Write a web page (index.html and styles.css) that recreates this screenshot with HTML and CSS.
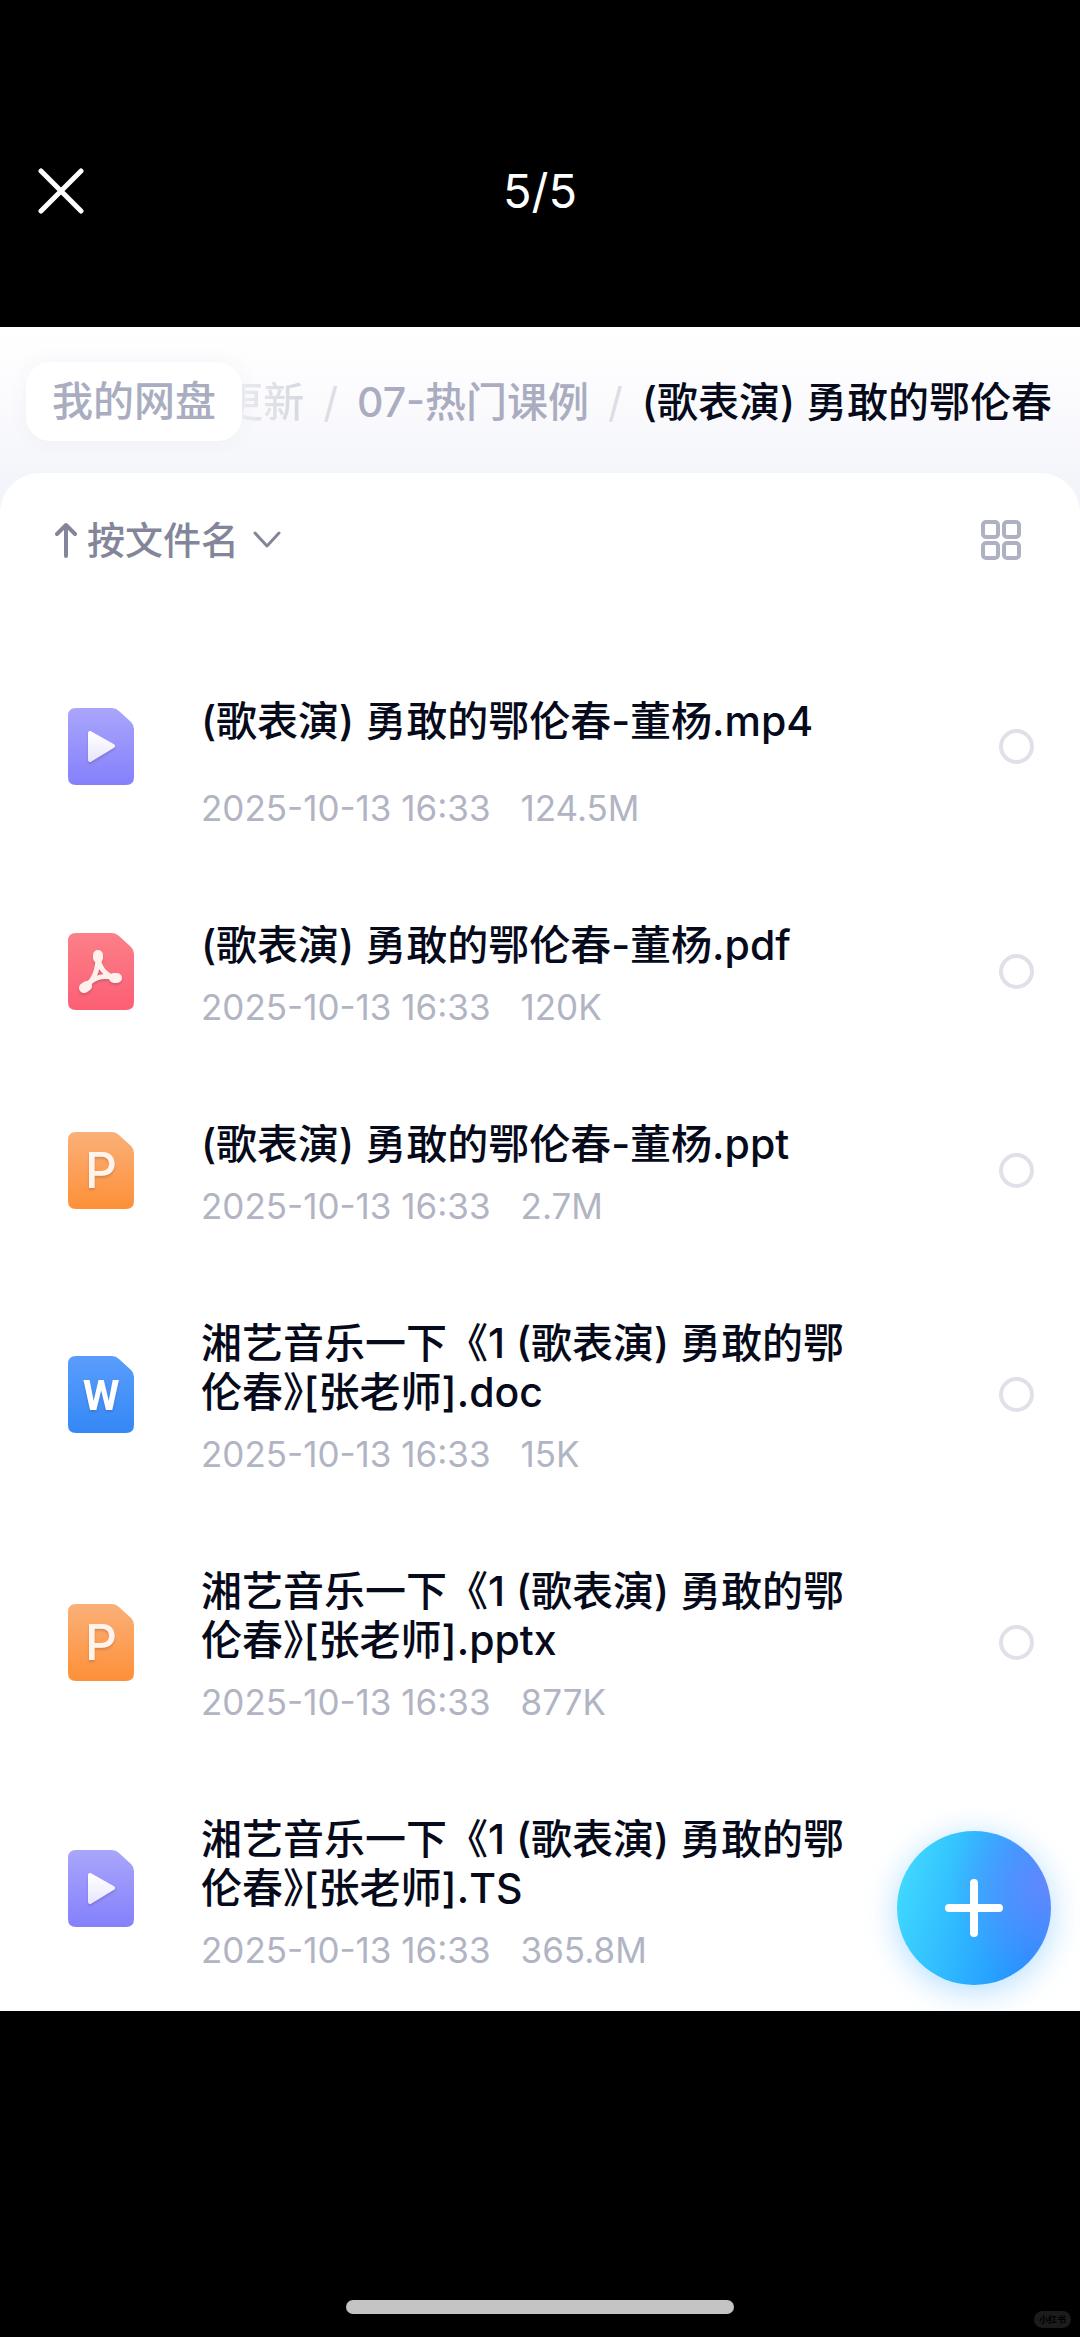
FILE: index.html
```html
<!DOCTYPE html>
<html lang="zh-CN">
<head>
  <meta charset="UTF-8" />
  <meta name="viewport" content="width=device-width, initial-scale=1.0"/>
  <title>我的网盘</title>
  <link rel="stylesheet" href="styles.css">
</head>
<body>

<!-- shared icon shapes -->
<svg class="defs" width="0" height="0" aria-hidden="true">
  <defs>
    <linearGradient id="purple" x1="0" y1="0" x2="0" y2="1"><stop offset="0" stop-color="#aaa6fb"/><stop offset="1" stop-color="#8480fc"/></linearGradient>
    <linearGradient id="red" x1="0" y1="0" x2="0" y2="1"><stop offset="0" stop-color="#fb8088"/><stop offset="1" stop-color="#fd5e74"/></linearGradient>
    <linearGradient id="orange" x1="0" y1="0" x2="0" y2="1"><stop offset="0" stop-color="#fab078"/><stop offset="1" stop-color="#fe9038"/></linearGradient>
    <linearGradient id="blue" x1="0" y1="0" x2="0" y2="1"><stop offset="0" stop-color="#5a9dfc"/><stop offset="1" stop-color="#3488f6"/></linearGradient>
    <linearGradient id="white" x1="0" y1="0" x2="0" y2="1"><stop offset="0" stop-color="#ffffff"/><stop offset="1" stop-color="#e9e7fd"/></linearGradient>
    <symbol id="sheet" viewBox="0 0 66 77">
      <path d="M8 0H44Q48 0 51 3L63 14Q66 17 66 21V69Q66 77 58 77H8Q0 77 0 69V8Q0 0 8 0Z"/>
    </symbol>
  </defs>
</svg>

<header class="topbar">
  <button class="close" aria-label="关闭">
    <svg width="46" height="46" viewBox="0 0 46 46" fill="none" stroke="#fff" stroke-width="5" stroke-linecap="round"><path d="M3 3L43 43M43 3L3 43"/></svg>
  </button>
  <span class="counter">5/5</span>
</header>

<main class="panel">
  <nav class="crumbs">
    <a class="root" href="#">我的网盘</a>
    <div class="trail">
      <a class="faded" href="#">更新</a>
      <span class="slash">/</span>
      <a href="#">07-热门课例</a>
      <span class="slash">/</span>
      <span class="current">(歌表演) 勇敢的鄂伦春</span>
    </div>
  </nav>

  <section class="card">
    <div class="toolbar">
      <button class="sort">
        <svg width="22" height="36" viewBox="0 0 22 36" fill="none" stroke="#83869a" stroke-width="4" stroke-linecap="round" stroke-linejoin="round"><path d="M11 34V3M2 12L11 3L20 12"/></svg>
        <span>按文件名</span>
        <svg class="chevron" width="28" height="18" viewBox="0 0 28 18" fill="none" stroke="#83869a" stroke-width="3" stroke-linecap="round" stroke-linejoin="round"><path d="M2 2L14 15L26 2"/></svg>
      </button>
      <button class="view" aria-label="网格视图">
        <svg width="42" height="42" viewBox="0 0 42 42" fill="none" stroke="#adb1c1" stroke-width="4"><rect x="3" y="3" width="15" height="15" rx="3"/><rect x="24" y="3" width="15" height="15" rx="3"/><rect x="3" y="24" width="15" height="15" rx="3"/><rect x="24" y="24" width="15" height="15" rx="3"/></svg>
      </button>
    </div>

    <ul class="files">
      <li class="file roomy">
        <svg class="icon" viewBox="0 0 66 77"><use href="#sheet" fill="url(#purple)"/><path class="mark" d="M22 25L45 38L22 52Z" fill="url(#white)" stroke="url(#white)" stroke-width="4" stroke-linejoin="round"/></svg>
        <label class="info" for="file1">
          <span class="name">(歌表演) 勇敢的鄂伦春-董杨.mp4</span>
          <span class="meta"><span>2025-10-13 16:33</span><span>124.5M</span></span>
        </label>
        <input type="checkbox" id="file1">
      </li>
      <li class="file">
        <svg class="icon" viewBox="0 0 66 77"><use href="#sheet" fill="url(#red)"/><g class="mark" fill="none" stroke="#fff0ec" stroke-linecap="round" stroke-linejoin="round"><path d="M30 24C31 34 37 43 48 45M30 24C30 37 26 48 16 55M21 50C27 44 37 42 48 45" stroke-width="5"/><path d="M30 22V25M46 45L49 45M16 55L19 53" stroke-width="10"/></g></svg>
        <label class="info" for="file2">
          <span class="name">(歌表演) 勇敢的鄂伦春-董杨.pdf</span>
          <span class="meta"><span>2025-10-13 16:33</span><span>120K</span></span>
        </label>
        <input type="checkbox" id="file2">
      </li>
      <li class="file">
        <svg class="icon" viewBox="0 0 66 77"><use href="#sheet" fill="url(#orange)"/><text class="mark letter" x="33" y="56">P</text></svg>
        <label class="info" for="file3">
          <span class="name">(歌表演) 勇敢的鄂伦春-董杨.ppt</span>
          <span class="meta"><span>2025-10-13 16:33</span><span>2.7M</span></span>
        </label>
        <input type="checkbox" id="file3">
      </li>
      <li class="file">
        <svg class="icon" viewBox="0 0 66 77"><use href="#sheet" fill="url(#blue)"/><text class="mark letter wide" x="33" y="54">W</text></svg>
        <label class="info" for="file4">
          <span class="name">湘艺音乐一下《1 (歌表演) 勇敢的鄂伦春<span class="half">》</span>[张老师].doc</span>
          <span class="meta"><span>2025-10-13 16:33</span><span>15K</span></span>
        </label>
        <input type="checkbox" id="file4">
      </li>
      <li class="file">
        <svg class="icon" viewBox="0 0 66 77"><use href="#sheet" fill="url(#orange)"/><text class="mark letter" x="33" y="56">P</text></svg>
        <label class="info" for="file5">
          <span class="name">湘艺音乐一下《1 (歌表演) 勇敢的鄂伦春<span class="half">》</span>[张老师].pptx</span>
          <span class="meta"><span>2025-10-13 16:33</span><span>877K</span></span>
        </label>
        <input type="checkbox" id="file5">
      </li>
      <li class="file">
        <svg class="icon" viewBox="0 0 66 77"><use href="#sheet" fill="url(#purple)"/><path class="mark" d="M22 25L45 38L22 52Z" fill="url(#white)" stroke="url(#white)" stroke-width="4" stroke-linejoin="round"/></svg>
        <div class="info">
          <span class="name">湘艺音乐一下《1 (歌表演) 勇敢的鄂伦春<span class="half">》</span>[张老师].TS</span>
          <span class="meta"><span>2025-10-13 16:33</span><span>365.8M</span></span>
        </div>
      </li>
    </ul>
  </section>

  <button class="add" aria-label="添加">
    <svg width="58" height="58" viewBox="0 0 58 58" fill="none" stroke="#fff" stroke-width="8" stroke-linecap="round"><path d="M29 4V54M4 29H54"/></svg>
  </button>
</main>

<footer class="bottombar">
  <div class="home"></div>
  <span class="badge">小红书</span>
</footer>

</body>
</html>
```

FILE: styles.css
```css
* {
  box-sizing: border-box;
}
body {
  margin: 0;
  min-height: 100vh;
  display: flex;
  flex-direction: column;
  background: #000;
  color: #060a1a;
  font-family: Inter, "Noto Sans CJK SC", sans-serif;
}
button {
  border: none;
  padding: 0;
  background: none;
  font-family: inherit;
  cursor: pointer;
}
svg {
  display: block;
  flex: none;
}
a {
  color: inherit;
  text-decoration: none;
}
.defs {
  position: absolute;
}

/* top bar */
.topbar {
  display: grid;
  grid-template-columns: 1fr auto 1fr;
  align-items: center;
  padding: 161px 38px 106px;
  color: #fff;
}
.close {
  justify-self: start;
}
.counter {
  font-size: 47px;
  line-height: 60px;
}

/* panel */
.panel {
  position: relative;
  overflow: hidden;
  background: linear-gradient(#fff, #fcfcfe 60px, #f4f5fa 150px);
}
.crumbs {
  display: flex;
  align-items: center;
  padding: 35px 28px 32px 26px;
  font-size: 41px;
  font-weight: 500;
  line-height: 60px;
  white-space: nowrap;
  color: #a9adbf;
}
.root {
  flex: none;
  padding: 9px 26px 10px;
  border-radius: 24px;
  background: #fff;
  box-shadow: 0 0 20px rgba(60, 70, 120, 0.05);
}
.trail {
  flex: 1;
  min-width: 0;
  display: flex;
  justify-content: flex-end;
  gap: 19px;
  overflow: hidden;
}
.faded,
.slash {
  color: #dcdee5;
}
.faded {
  background: linear-gradient(to right, #eff0f4, #d6d8df);
  background-clip: text;
  color: transparent;
}
.slash {
  font-weight: 400;
}
.current {
  color: #060a1a;
}
.card {
  background: #fff;
  border-radius: 40px 40px 0 0;
}

/* toolbar */
.toolbar {
  display: flex;
  justify-content: space-between;
  align-items: center;
  padding: 37px 58px 50px 55px;
}
.sort {
  display: flex;
  align-items: center;
  gap: 10px;
  font-size: 38px;
  font-weight: 500;
  line-height: 60px;
  color: #83869a;
}
.chevron {
  margin-left: 4px;
}

/* file list */
.files {
  list-style: none;
  margin: 0;
  padding: 0;
}
.file {
  display: flex;
  align-items: center;
  padding: 0 46px 0 68px;
}
.icon {
  width: 66px;
  height: 77px;
}
.mark {
  filter: drop-shadow(0 2px 1px rgba(60, 30, 60, 0.2));
}
.letter {
  font-family: Inter, sans-serif;
  font-size: 50px;
  font-weight: 500;
  text-anchor: middle;
  fill: #fff4ec;
}
.wide {
  font-family: Roboto, sans-serif;
  font-size: 42px;
  font-weight: 700;
  fill: #fff;
}
.info {
  flex: 1;
  padding: 49px 128px 46px 67px;
}
.roomy .info {
  padding-top: 77px;
}
.name,
.meta {
  display: block;
}
.name {
  font-size: 41px;
  font-weight: 500;
  line-height: 49px;
}
.half {
  font-feature-settings: "halt";
}
.meta {
  display: flex;
  gap: 30px;
  margin-top: 19px;
  font-size: 35px;
  line-height: 36px;
  color: #b1b4c3;
}
.roomy .meta {
  margin-top: 44px;
}
.file input {
  appearance: none;
  width: 35px;
  height: 35px;
  margin: 0;
  border: 4px solid #e0e1e8;
  border-radius: 50%;
}
.file:last-child .info {
  padding-right: 163px;
  margin-bottom: -3px;
}

/* floating add button */
.add {
  position: absolute;
  right: 29px;
  bottom: 26px;
  width: 154px;
  height: 154px;
  display: flex;
  align-items: center;
  justify-content: center;
  border-radius: 50%;
  background:
    radial-gradient(circle at 100% 35%, #6488ff, rgba(100, 136, 255, 0) 55%),
    linear-gradient(105deg, #40d8ff 8%, #2eb8ff 45%, #2490ff 85%);
  box-shadow: 0 6px 32px rgba(60, 170, 255, 0.4);
}

/* bottom */
.bottombar {
  position: relative;
  flex: 1;
  display: flex;
  justify-content: center;
  align-items: flex-end;
  padding-bottom: 23px;
}
.home {
  width: 36%;
  height: 14px;
  border-radius: 7px;
  background: #c4c4c4;
}
.badge {
  position: absolute;
  right: 9px;
  bottom: 9px;
  padding: 0 5px;
  border-radius: 9px;
  background: #1c1c1c;
  color: #000;
  font-size: 9px;
  font-weight: 700;
  line-height: 17px;
}
```
